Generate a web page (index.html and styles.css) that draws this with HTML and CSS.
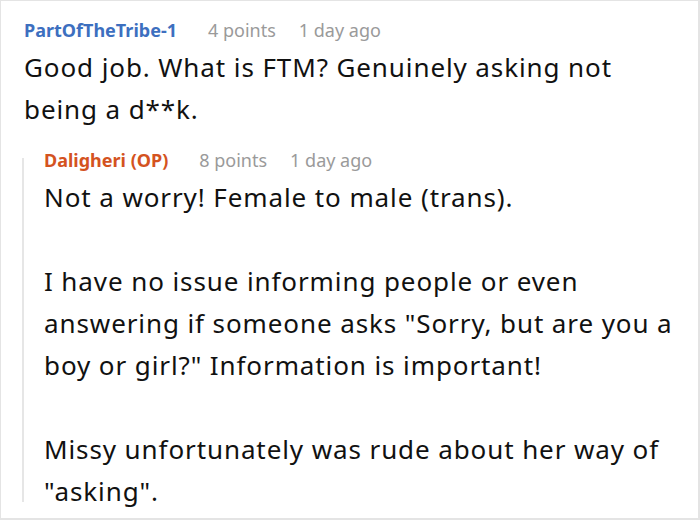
FILE: index.html
```html
<!DOCTYPE html>
<html>
<head>
<meta charset="utf-8">
<link rel="stylesheet" href="styles.css">
</head>
<body>
<div class="frame">
  <div class="comment">
    <div class="meta">
      <span class="author author-blue">PartOfTheTribe-1</span>
      <span class="points">4 points</span>
      <span class="time">1 day ago</span>
    </div>
    <div class="body">
      <p>Good job. What is FTM? Genuinely asking not being a d**k.</p>
    </div>
  </div>
  <div class="reply">
    <div class="rail"></div>
    <div class="reply-content">
      <div class="meta">
        <span class="author author-op">Daligheri (OP)</span>
        <span class="points">8 points</span>
        <span class="time">1 day ago</span>
      </div>
      <div class="body">
        <p>Not a worry! Female to male (trans).</p>
        <p>I have no issue informing people or even answering if someone asks "Sorry, but are you a boy or girl?" Information is important!</p>
        <p>Missy unfortunately was rude about her way of "asking".</p>
      </div>
    </div>
  </div>
</div>
</body>
</html>
```

FILE: styles.css
```css
html, body {
  margin: 0;
  padding: 0;
  background: #ffffff;
}

.frame {
  box-sizing: border-box;
  width: 700px;
  height: 520px;
  border-top: 1px solid #e4e4e4;
  border-left: 1px solid #e4e4e4;
  border-right: 2px solid #e4e4e4;
  border-bottom: 2px solid #e4e4e4;
  font-family: "Noto Sans", sans-serif;
  color: #111111;
  overflow: hidden;
}

.comment {
  padding: 16px 38px 0 23px;
}

.meta {
  display: flex;
  gap: 23px;
  font-size: 18px;
  line-height: 26px;
  margin-bottom: 3px;
}

.author {
  font-weight: bold;
  margin-right: 8px;
}

.author-blue {
  color: #3d6fbf;
}

.author-op {
  color: #d4531f;
}

.points, .time {
  color: #9a9a9a;
}

.body {
  font-size: 26px;
  line-height: 42px;
  letter-spacing: 0.9px;
}

.body p {
  margin: 0 0 42px 0;
}

.body p:last-child {
  margin-bottom: 0;
}

.reply {
  display: flex;
  height: 360px;
  margin: 12px 0 0 21px;
}

.rail {
  flex: none;
  width: 2px;
  margin-top: 16px;
  background: #e6e6e6;
}

.reply-content {
  padding: 5px 0 0 20px;
}
```
